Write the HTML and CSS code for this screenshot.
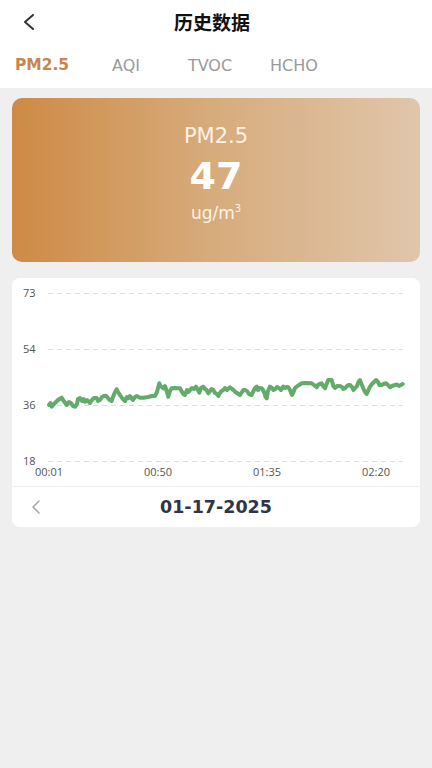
FILE: index.html
```html
<!DOCTYPE html>
<html lang="zh">
<head>
  <meta charset="UTF-8" />
  <title>历史数据</title>
  <link rel="stylesheet" href="styles.css">
</head>
<body>
  <header class="top">
    <div class="bar">
      <svg class="back" width="14" height="16" viewBox="0 0 14 16"><polyline points="11,1 3,8 11,15" fill="none" stroke="#333" stroke-width="2" stroke-linecap="round" stroke-linejoin="round"/></svg>
      <h1>历史数据</h1>
    </div>
    <nav class="tabs">
      <span class="tab active">PM2.5</span>
      <span class="tab">AQI</span>
      <span class="tab">TVOC</span>
      <span class="tab">HCHO</span>
    </nav>
  </header>

  <main class="content">
    <section class="hero">
      <div class="hero-name">PM2.5</div>
      <div class="hero-value">47</div>
      <div class="hero-unit">ug/m<sup>3</sup></div>
    </section>

    <section class="chart-card">
      <svg class="chart" width="408" height="208" viewBox="0 0 408 208">
        <g class="grid" stroke="#dcdcdc" stroke-width="1" stroke-dasharray="5 4">
          <line x1="36" y1="15.5" x2="391" y2="15.5"/>
          <line x1="36" y1="71.5" x2="391" y2="71.5"/>
          <line x1="36" y1="127.5" x2="391" y2="127.5"/>
          <line x1="36" y1="183.5" x2="391" y2="183.5"/>
        </g>
        <g class="ylab">
          <text x="11" y="19">73</text>
          <text x="11" y="75">54</text>
          <text x="11" y="131">36</text>
          <text x="11" y="187">18</text>
        </g>
        <g class="xlab" text-anchor="middle">
          <text x="37" y="198">00:01</text>
          <text x="146" y="198">00:50</text>
          <text x="255" y="198">01:35</text>
          <text x="364" y="198">02:20</text>
        </g>
        <polyline fill="none" stroke="#62ab6b" stroke-width="4" stroke-linejoin="round" stroke-linecap="round"
          points="37,127 38.5,125 39.7,128.7 42,126 44,124 46,122 47.5,121 49.7,119.7 51,122 52.5,124 54.7,127 57,124 59,125 61,128 63,128.7 65,126 66,121 68,120 70,123 71.5,121 73,123.7 75,122 78,125 80,122 82,120 84.7,120 86,123 88,122 90,119 92,118 94,117.7 96,120 97.5,122 99.7,123 101,119 103,114 104.7,111.3 106,114 108,117 110,120 113,123 115,119 116.5,120 118,118 119.5,120 121,122 123,119 124.7,118 128,119.7 131.3,119.7 136,119 140,118 143,118 145,114 147.3,105.3 148.5,108 151.3,110.3 153,108 155,114 156.3,118.7 158,113 159.7,110.3 163,110 166,110.3 168,110.3 170,114 171.5,116 173,117 175,112 176.5,114 178,112 180,110 182,111 184,108.7 186,112 187.3,114.7 189,110 191.3,108.7 193,111 194.5,112 196.3,115.3 198,113 199.5,111 201.3,112 203,115 205,116 206.3,118 208,115 209.5,113 211.3,112 213,110 215,112 218,109.3 220,111 221.5,112 223,113.7 225,115 228,117 230,114 231.5,112 233,112 235,113 237,116 239.7,117 241,114 243,110 244.7,108.7 246,112 247.5,110 249.7,110.3 251,112 252.5,115 253.5,119 254.7,120.3 256,113 258,108.7 260,110 261.5,112 263,111.3 265,109 267,110 269,112 271.3,108.7 273,110 274.5,109 276.3,109.3 278,112 280,117 281.5,114 283,110 284.7,108.7 287,107 289.7,105.3 294,105 299.7,105.3 302,107 304.7,109.3 306,107 307.5,106 309.7,105.3 311,108 313,110.3 315,105 316.3,102 319.7,102 321.3,108 323,110 325,108 328,108 330,109 331.5,111 333,110.3 335,108 336.5,107 338,107 340,109 341.5,112 343,110.3 345,108 346.5,104 348,102 349.5,106 351.3,110.3 353,114 354.7,116 356,113 358,108.7 360,106 362,104 364,102 366,104 367.5,107 369.7,107 371.5,106 374,105.3 376,107 378,109.3 380,108 383,107 385,106.5 387,108 390.7,106"/>
      </svg>
      <div class="date-row">
        <svg class="prev" width="10" height="14" viewBox="0 0 10 14"><polyline points="8,1 2,7 8,13" fill="none" stroke="#aaa" stroke-width="1.6" stroke-linecap="round" stroke-linejoin="round"/></svg>
        <span class="date">01-17-2025</span>
        <span></span>
      </div>
    </section>
  </main>
</body>
</html>
```

FILE: styles.css
```css
body { margin: 0; background-color: #efefef; font-family: 'DejaVu Sans', 'Noto Sans CJK SC', sans-serif; color: #333; }
.top { background: #fff; height: 88px; }
.bar { height: 42px; display: flex; align-items: center; justify-content: center; position: relative; }
.back { position: absolute; left: 22px; top: 14px; }
h1 { margin: 0 8px 0 0; font-family: 'Noto Sans CJK SC', sans-serif; font-size: 19px; font-weight: bold; color: #111; }
.tabs { display: flex; height: 46px; align-items: center; }
.tab { width: 84px; text-align: center; font-size: 16px; color: #9a9a9a; }
.tab.active { color: #c8854e; font-weight: bold; font-size: 15.5px; }
.content { padding: 10px 12px 0; display: flex; flex-direction: column; gap: 16px; }
.hero { height: 164px; border-radius: 10px; background: linear-gradient(to right, #ce8a45, #d7ac7d 50%, #e0c6ab); color: #fff; display: flex; flex-direction: column; align-items: center; padding-top: 26px; box-sizing: border-box; }
.hero-name { font-size: 21px; line-height: 24px; color: #fdf2e6; }
.hero-value { font-size: 38px; font-weight: bold; line-height: 44px; margin-top: 6px; }
.hero-unit { font-size: 17px; line-height: 22px; color: #fdf2e6; }
.hero-unit sup { font-size: 10px; vertical-align: 7px; }
.chart-card { background: #fff; border-radius: 8px; overflow: hidden; }
.chart { display: block; }
.ylab text, .xlab text { font-family: 'Open Sans', sans-serif; font-size: 11px; fill: #555; }
.date-row { border-top: 1px solid #f0f0f0; height: 40px; display: grid; grid-template-columns: 1fr auto 1fr; align-items: center; }
.prev { margin-left: 19px; }
.date { font-size: 17.5px; font-weight: bold; color: #2f3446; }
```
